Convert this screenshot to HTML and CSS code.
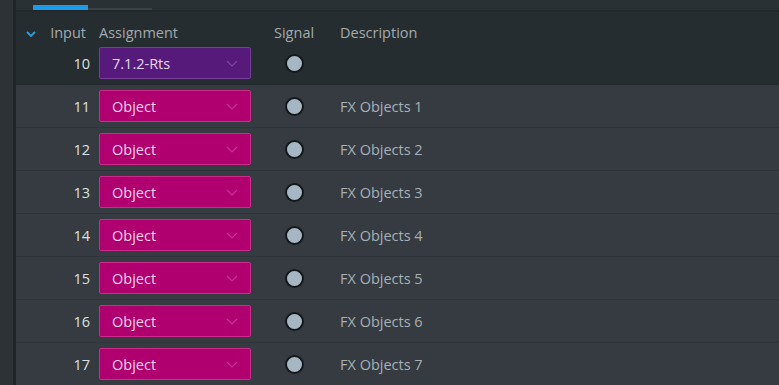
FILE: index.html
```html
<!DOCTYPE html>
<html lang="en">
<head>
    <meta charset="UTF-8">
    <title>Input Assignment</title>
    <link rel="stylesheet" href="styles.css">
</head>
<body>
    <div class="app">
        <div class="rail"></div>
        <div class="main">
            <div class="tabs">
                <div class="tab-active"></div>
                <div class="tab-rest"></div>
            </div>

            <div class="head">
                <div class="col-num">
                    <svg class="collapse" width="10" height="6" viewBox="0 0 10 6"><path d="M1 1 L5 5 L9 1" fill="none" stroke="#2a9fe0" stroke-width="1.8"/></svg>
                    <span class="head-input">Input</span>
                </div>
                <div class="col-assign">Assignment</div>
                <div class="col-signal">Signal</div>
                <div class="col-desc">Description</div>
            </div>

            <div class="rows" id="rows"></div>
        </div>
    </div>

    <script>
        // Channel list
        const channels = [
            { input: 10, type: '7.1.2-Rts', desc: '' },
            { input: 11, type: 'Object', desc: 'FX Objects 1' },
            { input: 12, type: 'Object', desc: 'FX Objects 2' },
            { input: 13, type: 'Object', desc: 'FX Objects 3' },
            { input: 14, type: 'Object', desc: 'FX Objects 4' },
            { input: 15, type: 'Object', desc: 'FX Objects 5' },
            { input: 16, type: 'Object', desc: 'FX Objects 6' },
            { input: 17, type: 'Object', desc: 'FX Objects 7' }
        ];

        const rows = document.getElementById('rows');
        channels.forEach((ch, i) => {
            const row = document.createElement('div');
            row.className = i === 0 ? 'row row-bed' : 'row';
            const kind = ch.type === 'Object' ? 'object' : 'bed';
            row.innerHTML =
                '<div class="col-num">' + ch.input + '</div>' +
                '<div class="col-assign"><div class="select ' + kind + '">' +
                    '<span>' + ch.type + '</span>' +
                    '<svg width="12" height="7" viewBox="0 0 12 7"><path d="M1 1 L6 6 L11 1" fill="none" stroke="currentColor" stroke-width="1.1"/></svg>' +
                '</div></div>' +
                '<div class="col-signal"><span class="led"></span></div>' +
                '<div class="col-desc">' + ch.desc + '</div>';
            rows.appendChild(row);
        });
    </script>
</body>
</html>
```

FILE: styles.css
```css
* {
    margin: 0;
    padding: 0;
    box-sizing: border-box;
}

body {
    font-family: "Open Sans", Arial, sans-serif;
    font-size: 14px;
    background: #262d30;
    width: 779px;
    height: 385px;
    overflow: hidden;
}

.app {
    display: flex;
    height: 100%;
}

.rail {
    width: 16px;
    flex-shrink: 0;
    background: #2c3235;
    border-right: 3px solid #202528;
}

.main {
    flex: 1;
    display: flex;
    flex-direction: column;
    overflow: hidden;
}

/* Tab strip */
.tabs {
    height: 12px;
    flex-shrink: 0;
    display: flex;
    align-items: flex-end;
    background: #2a3134;
    border-bottom: 2px solid #22282b;
    padding-left: 17px;
}

.tab-active {
    width: 55px;
    height: 5px;
    background: #1d9be6;
}

.tab-rest {
    width: 64px;
    height: 2px;
    background: #3a4145;
}

/* Header */
.head {
    height: 30px;
    flex-shrink: 0;
    display: flex;
    align-items: flex-end;
    color: #a3aaae;
    font-size: 14.5px;
}

.col-num {
    width: 74px;
    flex-shrink: 0;
    text-align: right;
}

.head .col-num {
    display: flex;
    align-items: center;
    justify-content: space-between;
    padding-left: 10px;
    padding-right: 4px;
}

.collapse {
    margin-top: 2px;
}

.col-assign {
    width: 152px;
    margin-left: 9px;
    flex-shrink: 0;
}

.col-signal {
    width: 89px;
    flex-shrink: 0;
}

.head .col-signal {
    padding-left: 23px;
}

.col-desc {
    flex: 1;
}

/* Rows */
.rows {
    flex-shrink: 0;
}

.row {
    height: 43px;
    display: flex;
    align-items: center;
    background: #353b41;
    border-bottom: 1px solid #2e3439;
}

.row-bed {
    background: #262d30;
    border-bottom: 1px solid #22282b;
}

.row .col-num {
    color: #dde0e2;
    font-size: 14.5px;
}

.row .col-desc {
    color: #a9afb3;
    font-size: 14.5px;
}

.select {
    height: 32px;
    display: flex;
    align-items: center;
    justify-content: space-between;
    padding: 0 12px 0 12px;
    border-radius: 2px;
    font-size: 14.5px;
}

.select.object {
    background: #b0006f;
    border: 1px solid #cc2b8c;
    color: #f3d3e8;
}

.select.object svg {
    color: #c9319a;
}

.select.bed {
    background: #561b7a;
    border: 1px solid #7a3c9a;
    color: #e4d6ee;
}

.select.bed svg {
    color: #7d45a3;
}

.led {
    display: block;
    width: 19px;
    height: 19px;
    margin-left: 34px;
    border-radius: 50%;
    background: #a6b7c3;
    border: 2px solid #14181b;
}
```
